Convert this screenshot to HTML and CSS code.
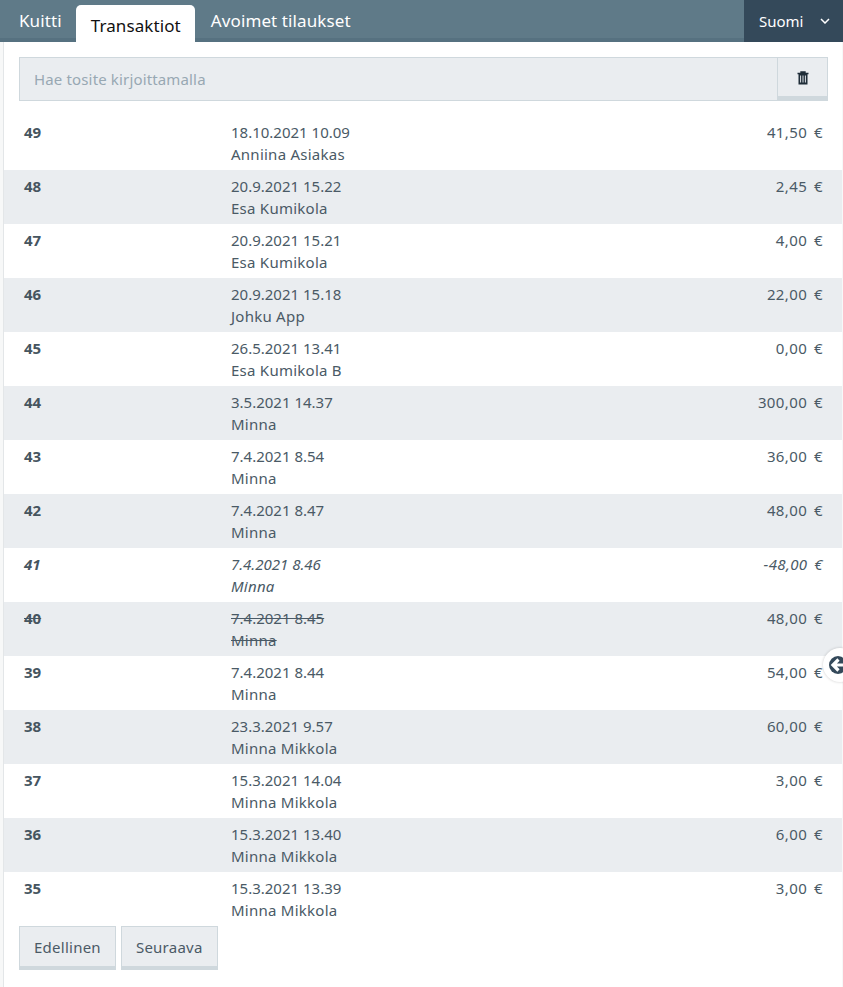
FILE: index.html
```html
<!DOCTYPE html>
<html lang="fi">
<head>
    <meta charset="UTF-8">
    <meta name="viewport" content="width=device-width, initial-scale=1.0">
    <title>Transaktiot</title>
    <link rel="stylesheet" href="styles.css">
</head>
<body>
    <header class="topbar">
        <nav class="tabs">
            <a class="tab">Kuitti</a>
            <a class="tab active">Transaktiot</a>
            <a class="tab">Avoimet tilaukset</a>
        </nav>
        <div class="lang">
            <span>Suomi</span>
            <svg class="chevron" width="10" height="6" viewBox="0 0 10 6"><path d="M1 1l4 4 4-4" fill="none" stroke="#fff" stroke-width="1.5"/></svg>
        </div>
    </header>
    <main class="content">
        <div class="search">
            <div class="search-input">Hae tosite kirjoittamalla</div>
            <button class="search-clear">
                <svg width="12" height="14" viewBox="0 0 12 14"><path d="M4 2V1h4v1M0.5 2.5h11" fill="none" stroke="#1f2d38" stroke-width="1.4"/><path d="M1.5 3h9v10.5h-9z" fill="#1f2d38"/><path d="M3.6 4.5v7M6 4.5v7M8.4 4.5v7" stroke="#dfe4e8" stroke-width="1"/></svg>
            </button>
        </div>
        <div class="rows">
            <div class="row"><b class="num">49</b><div class="info">18.10.2021 10.09<br><span class="name">Anniina Asiakas</span></div><div class="sum">41,50 €</div></div>
            <div class="row"><b class="num">48</b><div class="info">20.9.2021 15.22<br><span class="name">Esa Kumikola</span></div><div class="sum">2,45 €</div></div>
            <div class="row"><b class="num">47</b><div class="info">20.9.2021 15.21<br><span class="name">Esa Kumikola</span></div><div class="sum">4,00 €</div></div>
            <div class="row"><b class="num">46</b><div class="info">20.9.2021 15.18<br><span class="name">Johku App</span></div><div class="sum">22,00 €</div></div>
            <div class="row"><b class="num">45</b><div class="info">26.5.2021 13.41<br><span class="name">Esa Kumikola B</span></div><div class="sum">0,00 €</div></div>
            <div class="row"><b class="num">44</b><div class="info">3.5.2021 14.37<br><span class="name">Minna</span></div><div class="sum">300,00 €</div></div>
            <div class="row"><b class="num">43</b><div class="info">7.4.2021 8.54<br><span class="name">Minna</span></div><div class="sum">36,00 €</div></div>
            <div class="row"><b class="num">42</b><div class="info">7.4.2021 8.47<br><span class="name">Minna</span></div><div class="sum">48,00 €</div></div>
            <div class="row refund"><b class="num">41</b><div class="info">7.4.2021 8.46<br><span class="name">Minna</span></div><div class="sum">-48,00 €</div></div>
            <div class="row voided"><b class="num">40</b><div class="info">7.4.2021 8.45<br><span class="name">Minna</span></div><div class="sum">48,00 €</div></div>
            <div class="row"><b class="num">39</b><div class="info">7.4.2021 8.44<br><span class="name">Minna</span></div><div class="sum">54,00 €</div></div>
            <div class="row"><b class="num">38</b><div class="info">23.3.2021 9.57<br><span class="name">Minna Mikkola</span></div><div class="sum">60,00 €</div></div>
            <div class="row"><b class="num">37</b><div class="info">15.3.2021 14.04<br><span class="name">Minna Mikkola</span></div><div class="sum">3,00 €</div></div>
            <div class="row"><b class="num">36</b><div class="info">15.3.2021 13.40<br><span class="name">Minna Mikkola</span></div><div class="sum">6,00 €</div></div>
            <div class="row"><b class="num">35</b><div class="info">15.3.2021 13.39<br><span class="name">Minna Mikkola</span></div><div class="sum">3,00 €</div></div>
        </div>
        <div class="pager">
            <button class="btn">Edellinen</button>
            <button class="btn">Seuraava</button>
        </div>
    </main>
    <div class="handle">
        <svg width="18" height="18" viewBox="0 0 18 18"><circle cx="9" cy="9" r="9" fill="#34495a"/><path d="M9.500 3.500L4 9l5.500 5.500M5 9h11" fill="none" stroke="#fff" stroke-width="3.200"/></svg>
    </div>
</body>
</html>
```

FILE: styles.css
```css
body {
    font-family: "Noto Sans", Arial, sans-serif;
    font-size: 15px;
    line-height: 22px;
    margin: 0;
    padding: 0;
    background-color: #f7f8f8;
    color: #4a5a66;
    height: 987px;
    overflow: hidden;
}
.topbar {
    display: flex;
    justify-content: space-between;
    height: 42px;
    background-color: #5f7a88;
    box-shadow: inset 0 -4px 0 #567180;
}
.tabs {
    display: flex;
    align-items: flex-start;
    padding: 5px 0 0 4px;
}
.tab {
    display: block;
    padding: 5px 15px 0;
    color: #fff;
    font-size: 17px;
    letter-spacing: 0.1px;
}
.tab.active {
    height: 37px;
    box-sizing: border-box;
    padding: 10px 14px 0 15px;
    margin: 0 1px 0 -1px;
    background: #fff;
    color: #111;
    border-radius: 5px 5px 0 0;
}
.lang {
    display: flex;
    align-items: center;
    gap: 17px;
    width: 99px;
    box-sizing: border-box;
    padding-left: 15px;
    background-color: #34495a;
    color: #fff;
}
.content {
    margin-left: 3px;
    margin-right: 1px;
    height: 945px;
    background: #fff;
    border-left: 1px solid #e3e6e8;
    padding-top: 15px;
    box-sizing: border-box;
}
.search {
    display: flex;
    height: 44px;
    margin: 0 14px 15px 15px;
    box-sizing: border-box;
    border: 1px solid #cfd8dd;
    background: #eaedf0;
}
.search-input {
    flex: 1;
    padding: 10px 14px;
    color: #98a8b3;
    letter-spacing: 0.15px;
}
.search-clear {
    width: 50px;
    padding: 5px 0 0;
    border: 0;
    border-left: 1px solid #cfd8dd;
    border-bottom: 4px solid #cfd8dd;
    background: #eaedf0;
}
.row {
    display: grid;
    grid-template-columns: 207px 1fr auto;
    height: 54px;
    box-sizing: border-box;
    padding: 5px 19px 0 20px;
}
.row:nth-child(even) {
    background: #eaedf0;
}
.num {
    color: #46555f;
}
.name {
    letter-spacing: 0.25px;
}
.sum {
    letter-spacing: 0.4px;
    word-spacing: 2.5px;
}
.refund {
    font-style: italic;
}
.voided .num,
.voided .info {
    text-decoration: line-through;
}
.pager {
    display: flex;
    gap: 5px;
    padding-left: 15px;
}
.btn {
    height: 44px;
    padding: 0 14px;
    font-family: inherit;
    font-size: 15px;
    letter-spacing: 0.25px;
    color: #4a5a66;
    background: #eaedf0;
    border: 1px solid #cfd8dd;
    border-bottom-width: 4px;
}
.handle {
    position: absolute;
    left: 823px;
    top: 648px;
    width: 34px;
    height: 34px;
    border-radius: 50%;
    background: #fff;
    box-shadow: 0 0 3px rgba(0,0,0,0.2);
    display: flex;
    align-items: center;
    padding-left: 6px;
    box-sizing: border-box;
}
```
